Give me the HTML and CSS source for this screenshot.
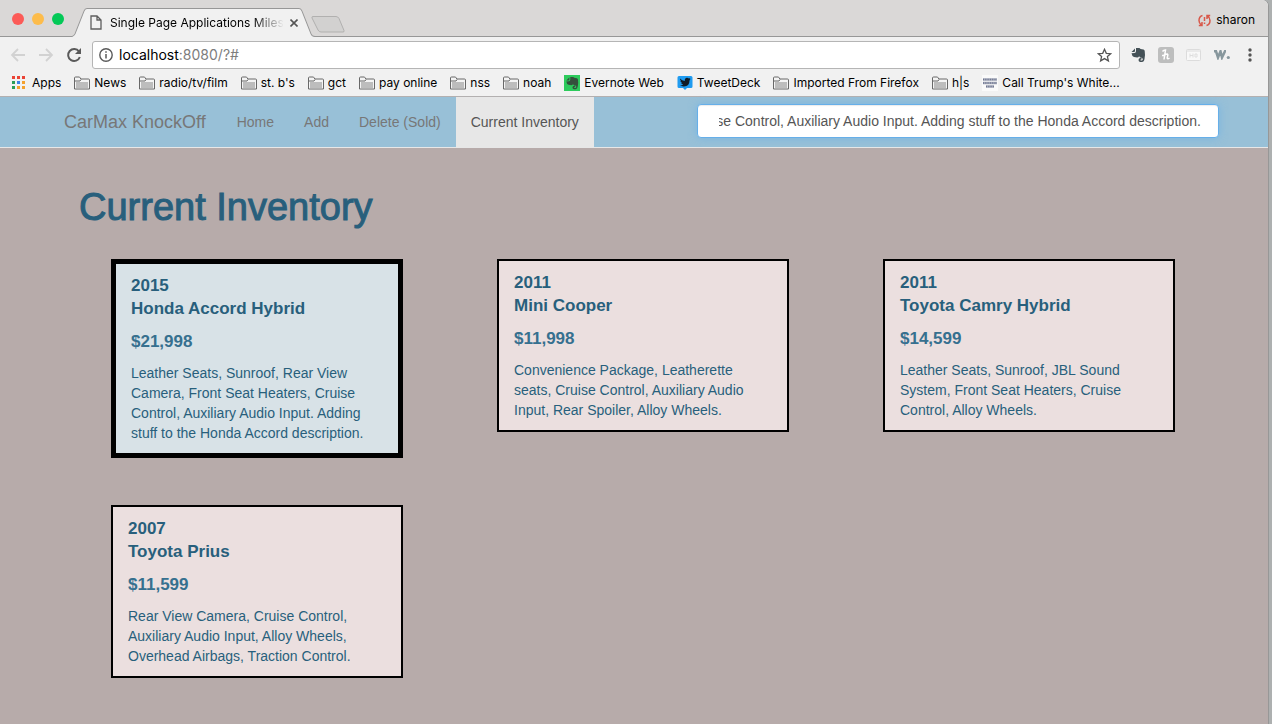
FILE: index.html
```html
<!DOCTYPE html>
<html lang="en">
<head>
<meta charset="utf-8">
<title>Single Page Applications Milestones</title>
<link rel="stylesheet" href="styles.css">
</head>
<body>
<svg class="defs" aria-hidden="true">
  <symbol id="folder" viewBox="0 0 16 14"><path d="M.5 13V2q0-1 1-1H5q.8 0 1.200.8L6.800 3H14.500q1 0 1 1v9z" fill="#f4f4f4" stroke="#686868"/><path d="M2 6h12v6H2z" fill="#bdbdbd"/><path d="M1 5h5l1-1.500" fill="none" stroke="#686868"/></symbol>
  <symbol id="elephant" viewBox="0 0 16 16"><path d="M5 1.500 1.500 5H4q1 0 1-1zM6 1h3q1 .2 1.500 1l3 .6q1 .3 1.200 1.400.7 4-.2 8Q14 15 12 15H10.500Q8.500 15 8.500 13T10.500 11h1v1.500h-1v1h1.500q.8-.2.8-1.500-.3-1-1.300-1.200L10 10.500q-.6-.3-.8-1.500-.7 1.500-2 1.500L4 10Q2 9.500 1.500 6.200L4.500 6Q6 5.800 6 4z"/></symbol>
</svg>
<div class="window">
  <header class="chrome">
    <div class="tabstrip">
      <div class="lights"><i class="light red"></i><i class="light amber"></i><i class="light green"></i></div>
      <div class="tab">
        <svg class="tab-shape" viewBox="0 0 244 28" preserveAspectRatio="none" aria-hidden="true"><path d="M0 27.500Q2 27 3 25L12 3q1-2.500 3-2.500H227q2 0 3 2.500l9 22q1 2.500 4 2.500V28H0z" fill="#f1f1f1"/><path d="M0 27.500Q2 27 3 25L12 3q1-2.500 3-2.500H227q2 0 3 2.500l9 22q1 2.500 4 2.500" fill="none" stroke="#979797"/></svg>
        <svg class="doc" width="12" height="15" viewBox="0 0 12 15" aria-hidden="true"><path d="M1 1h6l4 4v9H1zM7 1v4h4" fill="none" stroke="#5f5f5f" stroke-width="1.300"/></svg>
        <span class="tab-title">Single Page Applications Miles</span>
        <button class="plain tab-close" aria-label="Close tab"><svg width="8" height="8" viewBox="0 0 8 8"><path d="M.5.500l7 7m0-7l-7 7" stroke="#555" stroke-width="1.600"/></svg></button>
      </div>
      <button class="plain newtab" aria-label="New tab"><svg width="34" height="17" viewBox="0 0 34 17"><path d="M1 2Q.5.500 2 .500H25q2 0 3 2l5 12q.5 1.500-1 1.500H10q-2 0-3-2z" fill="#d2d1d0" stroke="#b1b0af"/></svg></button>
      <button class="plain user"><svg width="13" height="13" viewBox="0 0 13 13" aria-hidden="true"><path d="M4.500 1.500Q1 2.500 1 6.500q0 3 2.500 4.500M.8 11.500h3.200V8M8.500 11.500Q12 10.500 12 6.500q0-3-2.500-4.500M12.200 1.500H9V5" fill="none" stroke="#d8584a" stroke-width="1.500"/><path d="M6.500 3v4m0 1.500V10" stroke="#d8584a" stroke-width="1.500"/></svg>sharon</button>
    </div>
    <div class="toolbar">
      <button class="plain" aria-label="Back"><svg width="16" height="16" viewBox="0 0 16 16"><path d="M15 8H2m6-6L2 8l6 6" fill="none" stroke="#d2d2d2" stroke-width="1.800"/></svg></button>
      <button class="plain" aria-label="Forward"><svg width="16" height="16" viewBox="0 0 16 16"><path d="M1 8h13M8 2l6 6-6 6" fill="none" stroke="#d2d2d2" stroke-width="1.800"/></svg></button>
      <button class="plain" aria-label="Reload"><svg width="16" height="16" viewBox="0 0 16 16"><path d="M13 4.500A6 6 0 1 0 13.800 10" fill="none" stroke="#5a5a5a" stroke-width="2"/><path d="M15 1v6H9z" fill="#5a5a5a"/></svg></button>
      <div class="omnibox">
        <svg width="14" height="14" viewBox="0 0 14 14" aria-hidden="true"><circle cx="7" cy="7" r="6.200" fill="none" stroke="#5a5a5a" stroke-width="1.400"/><path d="M7 6v4.500M7 3.300v1.500" stroke="#5a5a5a" stroke-width="1.500"/></svg>
        <span class="url">localhost<span class="url-rest">:8080/?#</span></span>
        <button class="plain" aria-label="Bookmark this page"><svg width="15" height="15" viewBox="0 0 15 15"><path d="M7.500 1.300l1.800 4 4.400.4-3.300 2.900 1 4.300-3.900-2.300-3.900 2.300 1-4.300L1.300 5.700l4.400-.4z" fill="none" stroke="#555" stroke-width="1.300"/></svg></button>
      </div>
      <div class="extensions">
        <button class="plain" aria-label="Evernote"><svg width="16" height="16" fill="#445157"><use href="#elephant"/></svg></button>
        <button class="plain" aria-label="Honey"><svg width="16" height="16" viewBox="0 0 16 16"><rect width="16" height="16" rx="3" fill="#bdbebe"/><path d="M4.500 4.500Q5.500 3 7.500 3L6 12.500M4 8.500q1.500.3 2.800-.5Q10 5.800 9.800 8.200L9.200 11q.3 1.500 2.300 0" fill="none" stroke="#fff" stroke-width="1.500"/></svg></button>
        <button class="plain" aria-label="Page tool"><svg width="16" height="12" viewBox="0 0 16 12"><rect x=".5" y=".5" width="14" height="11" rx="1" fill="#f8f8f8" stroke="#dcdcdc"/><path d="M1 2h13" stroke="#dcdcdc"/><path d="M4 4.500v4M7 4.500v4M4 6.500h3M9 5v3h2V5z" fill="none" stroke="#dedede"/></svg></button>
        <button class="plain" aria-label="Wikiwand"><svg width="16" height="10" viewBox="0 0 16 10"><path d="M0 1.300h2L4 7.500 6.500 1.300 8 7.500l3-6.200h1" fill="none" stroke="#87979d" stroke-width="2.500"/><circle cx="14.300" cy="7.500" r="1.600" fill="#87979d"/></svg></button>
        <button class="plain" aria-label="Menu"><svg width="16" height="16" viewBox="0 0 16 16" fill="#555"><circle cx="8" cy="3" r="1.700"/><circle cx="8" cy="8" r="1.700"/><circle cx="8" cy="13" r="1.700"/></svg></button>
      </div>
    </div>
    <nav class="bookmarks" aria-label="Bookmarks">
      <a class="apps" href="#"><svg width="13" height="13" viewBox="0 0 13 13" aria-hidden="true"><path d="M0 0h3v3H0zM5 0h3v3H5zM10 0h3v3h-3z" fill="#ea4335"/><path d="M0 5h3v3H0z" fill="#2a9d57"/><path d="M5 5h3v3H5z" fill="#3b82e8"/><path d="M10 5h3v3h-3zM5 10h3v3H5zM10 10h3v3h-3z" fill="#f4a12d"/><path d="M0 10h3v3H0z" fill="#2a9d57"/></svg>Apps</a>
      <a href="#"><svg width="16" height="14"><use href="#folder"/></svg>News</a>
      <a href="#"><svg width="16" height="14"><use href="#folder"/></svg>radio/tv/film</a>
      <a href="#"><svg width="16" height="14"><use href="#folder"/></svg>st. b's</a>
      <a href="#"><svg width="16" height="14"><use href="#folder"/></svg>gct</a>
      <a href="#"><svg width="16" height="14"><use href="#folder"/></svg>pay online</a>
      <a href="#"><svg width="16" height="14"><use href="#folder"/></svg>nss</a>
      <a href="#"><svg width="16" height="14"><use href="#folder"/></svg>noah</a>
      <a href="#"><svg width="16" height="16" viewBox="0 0 16 16"><path d="M0 0h16v16H0z" fill="#2dcb5c"/><g transform="translate(1 1) scale(.88)" fill="#35513d"><use href="#elephant" width="16" height="16"/></g></svg>Evernote Web</a>
      <a href="#"><svg width="16" height="16" viewBox="0 0 16 16"><path d="M2 1h12q1.500 0 1.500 1.500v9q0 1.500-1.500 1.500H10l-2 2-2-2H2Q.5 13 .5 11.500v-9Q.5 1 2 1z" fill="#1f9bf0"/><path d="M3 3.500q2 2.300 4.800 2.400Q7.500 3 10 2.800q1.200 0 1.900.7l1.500-.5-.7 1.300.8-.1-1 1.200q0 5.800-5.500 6Q4.500 11.500 3 10.300q2 .1 3.200-.9-1.600-.2-2-1.400h.9Q3.400 7.300 3.400 5.800l.8.200Q2.700 4.900 3 3.500z" fill="#101c26"/></svg>TweetDeck</a>
      <a href="#"><svg width="16" height="14"><use href="#folder"/></svg>Imported From Firefox</a>
      <a href="#"><svg width="16" height="14"><use href="#folder"/></svg>h|s</a>
      <a href="#"><svg width="16" height="16" viewBox="0 0 16 16"><path d="M0 0h16v16H0z" fill="#fafafa"/><path d="M1 4.500h14M1 8h14M4 11.500h8" stroke="#a3a8b9" stroke-width="2.500"/><path d="M1 4.500h14M1 8h14M4 11.500h8" stroke="#6f7690" stroke-width="1.500" stroke-dasharray="1 1.300"/></svg>Call Trump's White...</a>
    </nav>
  </header>
  <div class="page">
    <nav class="navbar" aria-label="Main">
      <a class="brand" href="#">CarMax KnockOff</a>
      <a class="nav-link" href="#">Home</a>
      <a class="nav-link" href="#">Add</a>
      <a class="nav-link" href="#">Delete (Sold)</a>
      <a class="nav-link active" href="#">Current Inventory</a>
      <input class="editor" id="editor" type="text" aria-label="Description" value="Leather Seats, Sunroof, Rear View Camera, Front Seat Heaters, Cruise Control, Auxiliary Audio Input. Adding stuff to the Honda Accord description.">
    </nav>
    <main>
      <h1>Current Inventory</h1>
      <div class="cards">
        <article class="card selected"><h2>2015<br>Honda Accord Hybrid</h2><h3>$21,998</h3><p>Leather Seats, Sunroof, Rear View Camera, Front Seat Heaters, Cruise Control, Auxiliary Audio Input. Adding stuff to the Honda Accord description.</p></article>
        <article class="card"><h2>2011<br>Mini Cooper</h2><h3>$11,998</h3><p>Convenience Package, Leatherette seats, Cruise Control, Auxiliary Audio Input, Rear Spoiler, Alloy Wheels.</p></article>
        <article class="card"><h2>2011<br>Toyota Camry Hybrid</h2><h3>$14,599</h3><p>Leather Seats, Sunroof, JBL Sound System, Front Seat Heaters, Cruise Control, Alloy Wheels.</p></article>
        <article class="card"><h2>2007<br>Toyota Prius</h2><h3>$11,599</h3><p>Rear View Camera, Cruise Control, Auxiliary Audio Input, Alloy Wheels, Overhead Airbags, Traction Control.</p></article>
      </div>
    </main>
  </div>
</div>
<script src="script.js"></script>
</body>
</html>
```

FILE: styles.css
```css
* { box-sizing: border-box; }
body { margin: 0; background: #adb0b0; font-family: "Liberation Sans", Arial, sans-serif; font-size: 14px; line-height: 20px; }
a { text-decoration: none; color: inherit; }
svg { display: block; flex: none; }
.defs { position: absolute; width: 0; height: 0; }
.plain { border: 0; padding: 0; background: none; font: inherit; color: inherit; display: flex; align-items: center; }

.window { display: flex; flex-direction: column; min-height: 100vh; margin-right: 4px; border-radius: 0 6px 0 0; overflow: hidden; box-shadow: 1px 0 0 #979797; }

.chrome { background: #f1f1f1; border-bottom: 1px solid #b3b0b0; font-family: Inter, "Open Sans", sans-serif; font-size: 12px; line-height: 16px; color: #000; }
.tabstrip { display: flex; align-items: flex-end; height: 37px; padding: 0 13px 0 12px; background: #dad8d7; box-shadow: inset 0 -1px 0 #979797; }
.lights { display: flex; gap: 8px; align-self: center; }
.light { width: 12px; height: 12px; border-radius: 50%; }
.red { background: #fc5b57; }
.amber { background: #fdbc4b; }
.green { background: #04c957; }
.tab { position: relative; display: flex; align-items: center; width: 244px; height: 29px; margin-left: 8px; padding: 0 18px; }
.tab-shape { position: absolute; inset: 0; width: 100%; height: 100%; }
.doc, .tab-title, .tab-close { position: relative; }
.tab-title { flex: 1; margin: 0 6px 0 8px; white-space: nowrap; -webkit-mask-image: linear-gradient(90deg, #000 82%, transparent); mask-image: linear-gradient(90deg, #000 82%, transparent); }
.newtab { margin: 0 auto 4px -5px; }
.user { gap: 5px; margin-bottom: 9px; }

.toolbar { display: flex; align-items: center; gap: 12px; padding: 4px 10px 0; }
.omnibox { flex: 1; display: flex; align-items: center; gap: 6px; height: 28px; margin: 0 -2px; padding: 0 7px 0 6px; background: #fff; border: 1px solid #b5b5b5; border-radius: 3px; font-size: 14px; }
.url { flex: 1; }
.url-rest { color: #7d7d7d; }
.extensions { display: flex; align-items: center; gap: 12px; }

.bookmarks { display: flex; align-items: center; gap: 13px; height: 27px; padding: 0 12px; white-space: nowrap; }
.bookmarks a { display: flex; align-items: center; gap: 4px; }
.bookmarks .apps { gap: 7px; }

.page { flex: 1; background: #b7abaa; }
.navbar { display: flex; align-items: stretch; padding: 0 49px 0 64px; background: #98c0d7; border-bottom: 1px solid #e7e7e7; color: #777; }
.brand { padding: 15px 16px 15px 0; font-size: 18px; }
.nav-link { padding: 15px; }
.active { background: #e7e7e7; color: #555; }
.editor { flex: 0 1 522px; min-width: 0; height: 34px; margin: 7px 0 9px auto; padding: 6px 17px 6px 21px; border: 1px solid #66afe9; border-radius: 4px; outline: 0; background: #fff; color: #555; font: inherit; box-shadow: inset 0 1px 1px rgba(0,0,0,.08), 0 0 8px rgba(102,175,233,.6); }

h1 { margin: 0; padding: 38px 79px 30px; font-size: 38px; line-height: 43px; font-weight: 400; color: #285f7c; -webkit-text-stroke: 1px #285f7c; }
.cards { display: grid; grid-template-columns: repeat(3, 1fr); gap: 47px 94px; align-items: start; padding: 0 93px 46px 111px; }
.card { padding: 10px 15px; background: #ebdfdf; border: 2px solid #000; color: #285f7c; }
.selected { background: #d8e2e7; border-width: 5px; }
h2 { margin: 0; font-size: 17px; line-height: 23px; }
h3 { margin: 12px 0 11px; font-size: 17px; line-height: 20px; color: #36708f; }
p { margin: 0; }
```

FILE: script.js
```js
const editor = document.getElementById("editor");
editor.scrollLeft = editor.scrollWidth;
```
